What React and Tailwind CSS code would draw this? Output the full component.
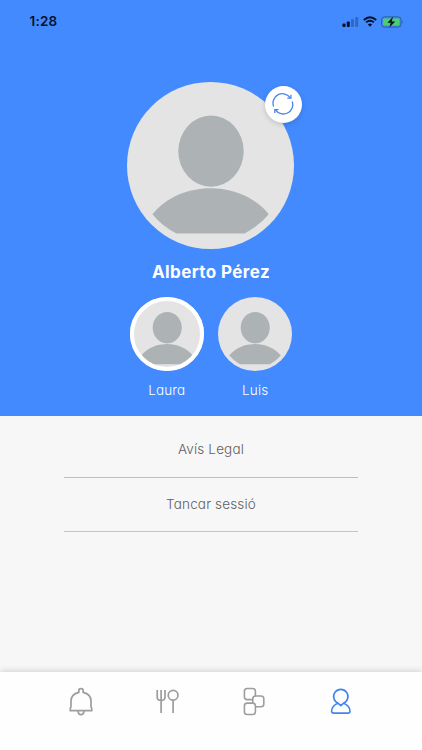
function Avatar({ className }) {
  return (
    <svg viewBox="0 0 167 167" className={className}>
      <circle cx="83.5" cy="83.5" r="83.5" fill="#e4e4e4" />
      <g fill="#adb3b5">
        <ellipse cx="84" cy="69.2" rx="32.7" ry="35.6" />
        <path d="M25.4 132.2C53 97.5 114 97.5 141.7 132.2Q132 144 117.5 151.5H49.5Q35 144 25.4 132.2Z" />
      </g>
    </svg>
  );
}

function StatusBar() {
  return (
    <div className="flex h-[43px] items-center justify-between pr-[18px] pl-[29.5px]">
      <span className="text-[13.5px] font-semibold tracking-[0.2px] text-[#06122b]">1:28</span>
      <div className="flex items-center">
        <svg width="17" height="12" viewBox="0 0 17 12" fill="#06122b">
          <rect x="0.5" y="7.5" width="3" height="3.5" rx="0.8" />
          <rect x="4.8" y="5.5" width="3" height="5.5" rx="0.8" />
          <rect x="9" y="3" width="3" height="8" rx="0.8" opacity="0.28" />
          <rect x="13.2" y="1" width="3" height="10" rx="0.8" opacity="0.28" />
        </svg>
        <svg className="ml-[4px]" width="14" height="11" viewBox="0 0 14 11" fill="none" stroke="#06122b" strokeWidth="1.9">
          <path d="M0.8 4Q7-1.6 13.2 4" />
          <path d="M3.1 6.4Q7 2.9 10.9 6.4" />
          <path d="M7 10.7L4.8 8.4Q7 6.6 9.2 8.4Z" fill="#06122b" stroke="none" />
        </svg>
        <svg className="ml-[4px]" width="23" height="12" viewBox="0 0 23 12">
          <rect x="0.6" y="0.9" width="19.4" height="10.2" rx="2.8" fill="none" stroke="#286096" />
          <rect x="2.1" y="2.4" width="16.4" height="7.2" rx="1.4" fill="#4dcc70" />
          <path d="M21.2 4.2Q22.8 6 21.2 7.8Z" fill="#286096" />
          <path d="M12 0.8L6.4 6.7H9.7L8.4 11.4L14.2 5.4H10.8Z" fill="#06122b" />
        </svg>
      </div>
    </div>
  );
}

function RefreshButton() {
  return (
    <button className="absolute top-[4px] left-[137.5px] flex size-[37px] items-center justify-center rounded-full bg-white shadow-[0_2px_5px_rgba(0,0,0,0.15)]">
      <svg width="22" height="22" viewBox="0 0 22 22" fill="none" stroke="#4385ed" strokeWidth="1.3">
        <path d="M1.6 13.4A9.4 9.4 0 0 1 18.3 5" />
        <path d="M20.2 8.5A9.4 9.4 0 0 1 3.5 16.8" />
        <path d="M18.9 1.8V5.2H15.3" />
        <path d="M2.8 20.1V16.6H6.5" />
      </svg>
    </button>
  );
}

function Profile({ name, selected }) {
  return (
    <div className="flex w-[74px] flex-col items-center">
      <div className="relative size-[74px]">
        <Avatar className="size-full" />
        {selected && <div className="absolute inset-0 rounded-full border-4 border-white" />}
      </div>
      <span className="mt-[10px] text-[13.5px] leading-[18px] font-light tracking-[0.15px] text-white">{name}</span>
    </div>
  );
}

function TabBar() {
  return (
    <nav className="grid h-[78px] shrink-0 grid-cols-4 justify-items-center bg-[#fefefe] px-[38px] pt-[14px] shadow-[0_-1px_6px_rgba(0,0,0,0.16)]">
      <svg width="30" height="32" viewBox="0 0 30 32" fill="none" stroke="#9d9d9d" strokeWidth="1.7">
        <path d="M4.3 24.7V22.2Q5 21.6 5 20V15Q5 8.2 12.8 6.3V4.7Q12.8 2.7 15 2.7T17.2 4.7V6.3Q25 8.2 25 15V20Q25 21.6 25.7 22.2V24.7Z" />
        <path d="M12.2 24.9V25.8A2.8 2.8 0 0 0 17.8 25.8V24.9" />
      </svg>
      <svg width="30" height="32" viewBox="0 0 30 32" fill="none" stroke="#9d9d9d" strokeWidth="1.7">
        <path d="M4.2 4V11.2Q4.2 14.4 8.1 14.4T12 11.2V4M8.1 4V27" />
        <circle cx="20.1" cy="9.2" r="4.9" />
        <path d="M20.1 14.1V27" />
      </svg>
      <svg width="30" height="32" viewBox="0 0 30 32" fill="none" stroke="#9d9d9d" strokeWidth="1.6">
        <path d="M16.4 10.4V5.3Q16.4 2.5 13.6 2.5H8.2Q5.4 2.5 5.4 5.3V10.8Q5.4 13.6 8.2 13.6H13.8" />
        <rect x="5.4" y="17.1" width="11" height="11.4" rx="2.7" />
        <path d="M13.8 17.1V12.7Q13.8 10 16.5 10H22Q24.8 10 24.8 12.7V18Q24.8 20.8 22 20.8H16.5" />
      </svg>
      <svg width="30" height="32" viewBox="0 0 30 32" fill="none" stroke="#4385ed" strokeWidth="1.6" strokeLinejoin="round">
        <path d="M12.3 17.3A7.2 7.2 0 1 1 17.3 17.3L14.8 19.7L12.3 17.3C8.4 18.2 5.6 21.5 5.6 25Q5.6 27.1 7.7 27.1H21.9Q24 27.1 24 25C24 21.5 21.2 18.2 17.3 17.3" />
      </svg>
    </nav>
  );
}

export default function App() {
  return (
    <div className="flex h-[750px] w-[422px] flex-col overflow-hidden bg-[#f7f7f7] font-['Inter',sans-serif] [font-feature-settings:'cv11']">
      <header className="h-[415.5px] shrink-0 bg-[#438aff]">
        <StatusBar />
        <div className="mt-[38.5px] flex flex-col items-center">
          <div className="relative mr-[1px] size-[167px]">
            <Avatar className="size-full" />
            <RefreshButton />
          </div>
          <h1 className="mt-[11px] text-[17px] leading-[24px] font-bold tracking-[0.4px] text-white">Alberto Pérez</h1>
          <div className="mt-[13.5px] flex gap-[14.5px]">
            <Profile name="Laura" selected />
            <Profile name="Luis" />
          </div>
        </div>
      </header>
      <main className="flex-1 px-[64px] text-center text-[13.5px] font-light text-[#606060]">
        <div className="flex h-[62px] items-center justify-center border-b border-[#bdbdbd] pt-[6px] tracking-[0.15px]">Avís Legal</div>
        <div className="flex h-[54.5px] items-center justify-center border-b border-[#c4c4c4] tracking-[0.15px]">Tancar sessió</div>
      </main>
      <TabBar />
    </div>
  );
}
